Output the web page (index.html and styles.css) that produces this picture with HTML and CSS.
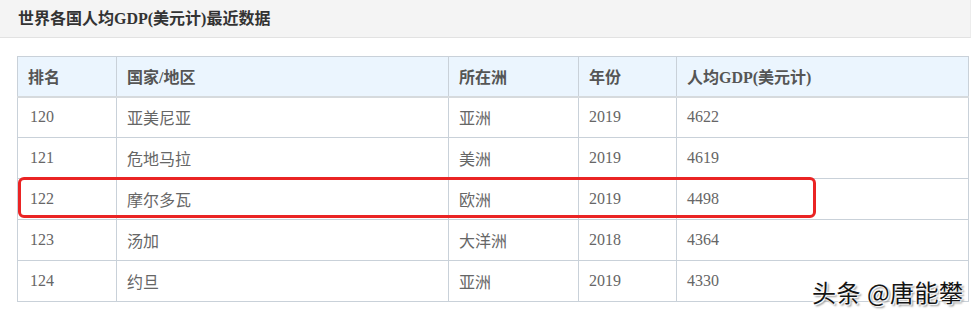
FILE: index.html
```html
<!DOCTYPE html>
<html lang="zh-CN">
<head>
<meta charset="utf-8">
<title>世界各国人均GDP(美元计)最近数据</title>
<link rel="stylesheet" href="styles.css">
</head>
<body>
<div class="page">
  <div class="titlebar">世界各国人均GDP(美元计)最近数据</div>
  <div class="content">
    <table class="gdp">
      <thead>
        <tr>
          <th class="c1">排名</th>
          <th class="c2">国家/地区</th>
          <th class="c3">所在洲</th>
          <th class="c4">年份</th>
          <th class="c5">人均GDP(美元计)</th>
        </tr>
      </thead>
      <tbody>
        <tr><td>120</td><td>亚美尼亚</td><td>亚洲</td><td>2019</td><td>4622</td></tr>
        <tr><td>121</td><td>危地马拉</td><td>美洲</td><td>2019</td><td>4619</td></tr>
        <tr><td>122</td><td>摩尔多瓦</td><td>欧洲</td><td>2019</td><td>4498</td></tr>
        <tr><td>123</td><td>汤加</td><td>大洋洲</td><td>2018</td><td>4364</td></tr>
        <tr><td>124</td><td>约旦</td><td>亚洲</td><td>2019</td><td>4330</td></tr>
      </tbody>
    </table>
    <div class="highlight"></div>
  </div>
  <div class="watermark">头条 @唐能攀</div>
</div>
</body>
</html>
```

FILE: styles.css
```css
html, body {
  margin: 0;
  padding: 0;
  background: #ffffff;
}

.page {
  position: relative;
  width: 976px;
  height: 316px;
  overflow: hidden;
  font-family: "Liberation Serif", "Noto Sans CJK SC", serif;
}

.titlebar {
  width: 952px;
  height: 37px;
  line-height: 37px;
  padding-left: 18px;
  background: #f4f4f4;
  border-bottom: 1px solid #e2e2e2;
  border-right: 1px solid #ececec;
  font-size: 16px;
  font-weight: bold;
  color: #333333;
}

.content {
  position: relative;
  padding: 18px 0 0 17px;
}

.gdp {
  border-collapse: collapse;
  width: 951px;
  table-layout: fixed;
  font-size: 16px;
}

.gdp th,
.gdp td {
  border: 1px solid #c9d1d9;
  padding: 0 0 0 10px;
  text-align: left;
  vertical-align: middle;
  box-sizing: border-box;
}

.gdp th {
  height: 40px;
  background: #ebf5fe;
  color: #555555;
  font-weight: bold;
  border-bottom: 2px solid #d6dadd;
}

.gdp td {
  height: 41px;
  color: #666666;
  font-weight: normal;
  background: #ffffff;
}

.gdp td:first-child {
  padding-left: 12px;
}

.c1 { width: 99px; }
.c2 { width: 332px; }
.c3 { width: 130px; }
.c4 { width: 98px; }
.c5 { width: 292px; }

.highlight {
  position: absolute;
  left: 18px;
  top: 139px;
  width: 792px;
  height: 35px;
  border: 3px solid #ea2424;
  border-radius: 6px;
}

.watermark {
  position: absolute;
  left: 812px;
  top: 276px;
  font-family: "Noto Sans CJK SC", sans-serif;
  font-size: 24px;
  line-height: 32px;
  letter-spacing: 0.5px;
  color: #141414;
  text-shadow: 0 0 2px #ffffff, 1px 1px 1px #ffffff, -1px -1px 1px #ffffff, 2px 2px 2px #888888;
}
```
